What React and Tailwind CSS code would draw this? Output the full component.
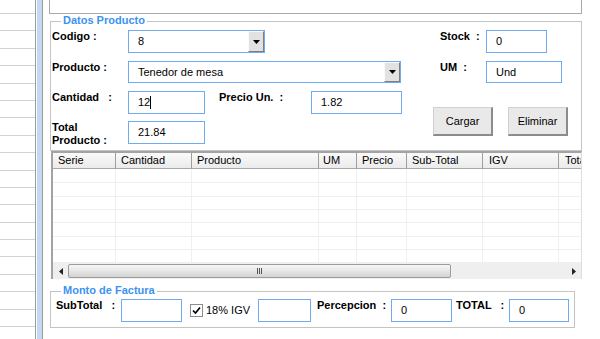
import React from "react";

function DownArrow() {
  return (
    <svg width="7" height="4" viewBox="0 0 7 4">
      <path d="M0 0H7L3.5 4Z" fill="#000" />
    </svg>
  );
}

function Combo({ w, h, text }) {
  return (
    <div className={`${w} ${h} border border-[#6fabee] bg-white flex items-stretch`}>
      <div className="flex-1 flex items-center pl-[9px] whitespace-nowrap overflow-hidden">{text}</div>
      <div className="w-[16px] bg-[#e2e2e2] border-t border-l border-[#fafafa] border-r border-b border-r-[#7e7e7e] border-b-[#7e7e7e] flex items-center justify-center">
        <DownArrow />
      </div>
    </div>
  );
}

function Box({ w, h = "h-[23px]", children }) {
  return (
    <div className={`${w} ${h} border border-[#6fabee] bg-white flex items-center pl-[9px] whitespace-nowrap`}>
      {children}
    </div>
  );
}

function Btn({ children }) {
  return (
    <div className="w-[60px] h-[29px] bg-[#e9e9e9] border border-[#d0d0d0] border-r-2 border-b-2 border-r-[#8c8c8c] border-b-[#8c8c8c] flex items-center justify-center">
      {children}
    </div>
  );
}

const cols = [
  { w: "w-[63px]", t: "Serie" },
  { w: "w-[76px]", t: "Cantidad" },
  { w: "w-[127px]", t: "Producto" },
  { w: "w-[38px]", t: "UM", p: "pl-[4px]" },
  { w: "w-[50px]", t: "Precio" },
  { w: "w-[76px]", t: "Sub-Total" },
  { w: "w-[76px]", t: "IGV", p: "pl-[6px]" },
  { w: "w-[76px]", t: "Total", p: "pl-[6px]" },
];

const rowHeights = ["h-[14px]", "h-[14px]", "h-[13px]", "h-[13px]", "h-[14px]", "h-[13px]", "h-[13px]"];

export default function App() {
  return (
    <div className="w-[600px] h-[339px] bg-white flex overflow-hidden font-['Liberation_Sans',Arial,sans-serif] text-[11px] leading-[13px] text-black">
      {/* left list */}
      <div className="w-[35px] shrink-0 flex flex-col">
        <div className="h-[14px] shrink-0 border-b border-[#d2d2d2]" />
        {Array.from({ length: 19 }).map((_, i) => (
          <div key={i} className="h-[17.4px] shrink-0 border-b border-[#d2d2d2]" />
        ))}
      </div>
      {/* splitter */}
      <div className="w-[1px] shrink-0 bg-[#9a9a9a]" />
      <div className="w-[1px] shrink-0 bg-white" />
      <div className="w-[5px] shrink-0 bg-[#c3d9f2]" />
      <div className="w-[1px] shrink-0 bg-[#9a9a9a]" />

      {/* main */}
      <div className="flex-1 flex flex-col">
        <div className="ml-[6px] w-[533px] h-[14px] shrink-0 border-x border-b border-[#a9a9a9]" />

        {/* Datos Producto */}
        <div className="relative mt-[7px] ml-[7px] w-[532px] h-[130px] shrink-0 border border-[#c4c4c4] flex">
          <span className="absolute -top-[8px] left-[10px] bg-white px-[2px] font-bold text-[#3b92f3]">Datos Producto</span>

          <div className="w-[382px] pl-[1px] pt-[8px] flex flex-col">
            <div className="flex items-start">
              <span className="w-[76px] font-bold whitespace-pre">Codigo :</span>
              <Combo w="w-[137px]" h="h-[23px]" text="8" />
            </div>
            <div className="flex items-start mt-[8px]">
              <span className="w-[76px] font-bold whitespace-pre">Producto :</span>
              <Combo w="w-[273px]" h="h-[22px]" text="Tenedor de mesa" />
            </div>
            <div className="flex items-start mt-[8px]">
              <span className="w-[76px] font-bold whitespace-pre">Cantidad   :</span>
              <Box w="w-[77px]">
                12<span className="inline-block w-[1px] h-[13px] bg-black" />
              </Box>
              <span className="ml-[14px] w-[92px] font-bold whitespace-pre">Precio Un.  :</span>
              <Box w="w-[91px]">1.82</Box>
            </div>
            <div className="flex items-start mt-[7px]">
              <span className="w-[76px] font-bold whitespace-pre">{"Total\nProducto :"}</span>
              <Box w="w-[77px]">21.84</Box>
            </div>
          </div>

          <div className="flex-1 pt-[8px] flex flex-col">
            <div className="flex items-start pl-[7px]">
              <span className="w-[46px] font-bold whitespace-pre">Stock  :</span>
              <Box w="w-[61px]">0</Box>
            </div>
            <div className="flex items-start pl-[7px] mt-[8px]">
              <span className="w-[46px] font-bold whitespace-pre">UM  :</span>
              <Box w="w-[76px]" h="h-[22px]">Und</Box>
            </div>
            <div className="flex mt-[24px] gap-[15px]">
              <Btn>Cargar</Btn>
              <Btn>Eliminar</Btn>
            </div>
          </div>
        </div>

        {/* Grid */}
        <div className="ml-[8px] w-[531px] h-[128px] shrink-0 border-t-2 border-l-2 border-[#a3a3a3] border-r border-r-[#dedede] flex flex-col overflow-hidden">
          <div className="h-[16px] shrink-0 flex bg-gradient-to-b from-[#fafafa] to-[#ebebeb] border-b border-[#a8a8a8]">
            {cols.map((c, i) => (
              <div
                key={i}
                className={`${c.w} shrink-0 ${c.p || "pl-[5px]"} border-r border-[#9e9e9e] flex items-center whitespace-nowrap overflow-hidden`}
              >
                {c.t}
              </div>
            ))}
          </div>
          <div className="flex-1 flex flex-col">
            {rowHeights.map((h, r) => (
              <div key={r} className={`${h} shrink-0 flex border-b border-[#efefef]`}>
                {cols.map((c, i) => (
                  <div key={i} className={`${c.w} shrink-0 border-r border-[#efefef]`} />
                ))}
              </div>
            ))}
          </div>
          {/* scrollbar */}
          <div className="h-[16px] shrink-0 bg-[#efefef] flex items-stretch">
            <div className="w-[15px] flex items-center justify-center">
              <svg width="4" height="7" viewBox="0 0 4 7">
                <path d="M4 0V7L0 3.5Z" fill="#222" />
              </svg>
            </div>
            <div className="w-[383px] my-[1px] rounded-[2px] border border-[#9c9c9c] bg-gradient-to-b from-[#f6f6f6] via-[#e6e6e6] to-[#d2d2d2] flex items-center justify-center gap-[1px]">
              <span className="w-[1px] h-[6px] bg-[#555]" />
              <span className="w-[1px] h-[6px] bg-[#555]" />
              <span className="w-[1px] h-[6px] bg-[#555]" />
            </div>
            <div className="flex-1" />
            <div className="w-[15px] flex items-center justify-center">
              <svg width="4" height="7" viewBox="0 0 4 7">
                <path d="M0 0V7L4 3.5Z" fill="#222" />
              </svg>
            </div>
          </div>
        </div>

        {/* Monto de Factura */}
        <div className="relative mt-[12px] ml-[7px] w-[525px] h-[37px] shrink-0 border border-[#c4c4c4] flex items-start pt-[7px] pl-[5px]">
          <span className="absolute -top-[8px] left-[10px] bg-white px-[2px] font-bold text-[#3b92f3]">Monto de Factura</span>
          <span className="w-[65px] font-bold whitespace-pre">SubTotal   :</span>
          <Box w="w-[61px]"></Box>
          <div className="ml-[8px] h-[23px] flex items-center">
            <div className="w-[13px] h-[13px] border border-[#8e8e8e] bg-white flex items-center justify-center">
              <svg width="11" height="11" viewBox="0 0 11 11">
                <path d="M2 5.5L4.5 8L9 2.5" stroke="#000" strokeWidth="1.7" fill="none" />
              </svg>
            </div>
            <span className="ml-[3px] w-[52px]">18% IGV</span>
          </div>
          <Box w="w-[53px]"></Box>
          <span className="ml-[6px] w-[74px] font-bold whitespace-pre">Percepcion  :</span>
          <Box w="w-[61px]">0</Box>
          <span className="ml-[4px] w-[53px] font-bold whitespace-pre">TOTAL   :</span>
          <Box w="w-[60px]">0</Box>
        </div>
      </div>
    </div>
  );
}
